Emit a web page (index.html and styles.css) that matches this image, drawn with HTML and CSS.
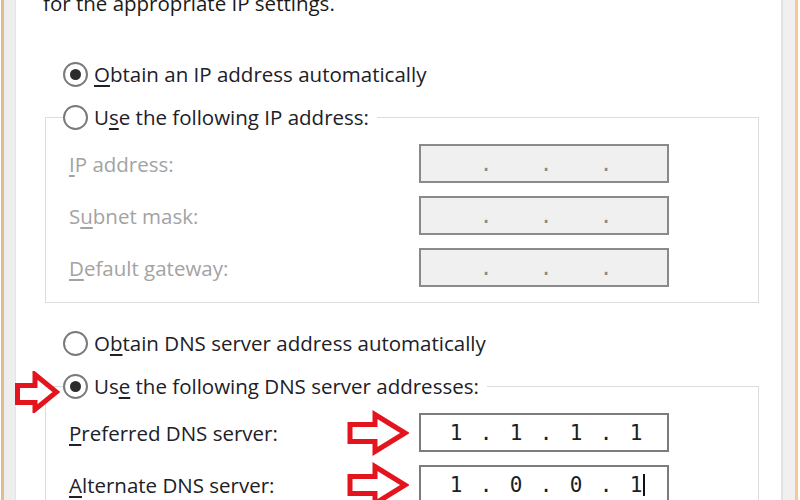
FILE: index.html
```html
<!DOCTYPE html>
<html>
<head>
<meta charset="utf-8">
<link rel="stylesheet" href="styles.css">
</head>
<body>
<div class="window">
  <div class="edge-left"></div>
  <div class="content">
    <div class="intro">for the appropriate IP settings.</div>

    <div class="row first">
      <span class="radio checked"></span>
      <span class="text"><u>O</u>btain an IP address automatically</span>
    </div>

    <fieldset class="group">
      <legend class="row">
        <span class="radio"></span>
        <span class="text">U<u>s</u>e the following IP address:</span>
      </legend>
      <div class="fields">
        <div class="label disabled"><span><u>I</u>P address:</span></div>
        <div class="ipbox off"><span class="seg"></span><span class="dot">.</span><span class="seg"></span><span class="dot">.</span><span class="seg"></span><span class="dot">.</span><span class="seg"></span></div>
        <div class="label disabled"><span>S<u>u</u>bnet mask:</span></div>
        <div class="ipbox off"><span class="seg"></span><span class="dot">.</span><span class="seg"></span><span class="dot">.</span><span class="seg"></span><span class="dot">.</span><span class="seg"></span></div>
        <div class="label disabled"><span><u>D</u>efault gateway:</span></div>
        <div class="ipbox off"><span class="seg"></span><span class="dot">.</span><span class="seg"></span><span class="dot">.</span><span class="seg"></span><span class="dot">.</span><span class="seg"></span></div>
      </div>
    </fieldset>

    <div class="row third">
      <span class="radio"></span>
      <span class="text">O<u>b</u>tain DNS server address automatically</span>
    </div>

    <fieldset class="group">
      <legend class="row">
        <svg class="arrow-left" width="46" height="42" viewBox="0 0 46 42"><polygon points="3.5,14.5 21,14.5 21,3.5 42.5,21 21,38.5 21,31.5 3.5,31.5" fill="#fff" stroke="#e3141d" stroke-width="5" stroke-linejoin="miter"/></svg>
        <span class="radio checked"></span>
        <span class="text">Us<u>e</u> the following DNS server addresses:</span>
      </legend>
      <div class="fields">
        <div class="label"><span><u>P</u>referred DNS server:</span>
          <svg class="arrow" width="62" height="46" viewBox="0 0 62 46"><polygon points="3,14.5 28,14.5 28,4.5 58,23 28,41.5 28,31.5 3,31.5" fill="#fff" stroke="#e3141d" stroke-width="5" stroke-linejoin="miter"/></svg>
        </div>
        <div class="ipbox"><span class="seg">1</span><span class="dot">.</span><span class="seg">1</span><span class="dot">.</span><span class="seg">1</span><span class="dot">.</span><span class="seg">1</span></div>
        <div class="label"><span><u>A</u>lternate DNS server:</span>
          <svg class="arrow" width="62" height="46" viewBox="0 0 62 46"><polygon points="3,14.5 28,14.5 28,4.5 58,23 28,41.5 28,31.5 3,31.5" fill="#fff" stroke="#e3141d" stroke-width="5" stroke-linejoin="miter"/></svg>
        </div>
        <div class="ipbox"><span class="seg">1</span><span class="dot">.</span><span class="seg">0</span><span class="dot">.</span><span class="seg">0</span><span class="dot">.</span><span class="seg caret">1</span></div>
      </div>
    </fieldset>
  </div>
  <div class="edge-right"></div>
</div>
</body>
</html>
```

FILE: styles.css
```css
html, body {
  margin: 0;
  padding: 0;
  background: #ffffff;
  overflow: hidden;
}

.window {
  display: flex;
  width: 800px;
  height: 500px;
  overflow: hidden;
  font-family: "Open Sans", "Noto Sans", sans-serif;
  font-size: 20.5px;
  color: #202028;
}

.edge-left {
  width: 11px;
  flex: none;
  background: #eeeeee;
  border-left: 3px solid #dfbd8c;
  margin-left: 1px;
}

.content {
  flex: 1;
  background: #ffffff;
  padding: 0 22px 0 29px;
  border-left: 1px solid #e4e4e4;
}

.edge-right {
  width: 12px;
  flex: none;
  background: #f0f0f0;
  border-left: 2px solid #e2e2e2;
  border-right: 3px solid #f4c993;
  margin-right: 2px;
}

.intro {
  line-height: 26px;
  margin: -10px 0 0 -2px;
  color: #1a1a1a;
}

.row {
  display: flex;
  align-items: center;
  height: 30px;
  margin-left: 18px;
}

.row.first {
  margin-top: 43px;
}

.row.third {
  margin-top: 25px;
}

.radio {
  width: 25px;
  height: 25px;
  box-sizing: border-box;
  border: 2px solid #7a7a7a;
  border-radius: 50%;
  background: #ffffff;
  display: flex;
  align-items: center;
  justify-content: center;
  margin-right: 6px;
  flex: none;
}

.radio.checked::after {
  content: "";
  width: 11px;
  height: 11px;
  border-radius: 50%;
  background: #2b2b2b;
}

.text {
  white-space: nowrap;
}

u {
  text-decoration-thickness: 2px;
  text-underline-offset: 3px;
}

.group {
  margin: 13px 0 0 0;
  padding: 12px 0 15px 23px;
  border: 1px solid #dcdcdc;
  min-width: 0;
}

.group legend.row {
  padding: 0 8px 0 0;
  margin-left: -6px;
  position: relative;
}

.arrow-left {
  position: absolute;
  left: -49px;
  top: 0px;
}

.fields {
  display: grid;
  grid-template-columns: 350px 250px;
  grid-auto-rows: 39px;
  row-gap: 13px;
}

.label {
  display: flex;
  align-items: center;
  justify-content: space-between;
  white-space: nowrap;
  color: #202028;
}

.label.disabled {
  color: #a3a3a3;
}

.arrow {
  margin-right: 10px;
  flex: none;
}

.ipbox {
  box-sizing: border-box;
  border: 2px solid #7c7c7c;
  background: #ffffff;
  display: flex;
  align-items: center;
  padding-left: 20px;
  font-family: "DejaVu Sans Mono", "Liberation Mono", monospace;
  font-size: 21px;
  color: #1e1e1e;
}

.ipbox.off {
  background: #f0f0f0;
  border-color: #8a8a8a;
  color: #8a8a8a;
}

.seg, .dot {
  width: 30px;
  text-align: center;
  line-height: 30px;
  height: 30px;
}

.caret {
  position: relative;
}

.caret::after {
  content: "";
  position: absolute;
  left: 22px;
  top: 4px;
  width: 2px;
  height: 22px;
  background: #111111;
}
```
